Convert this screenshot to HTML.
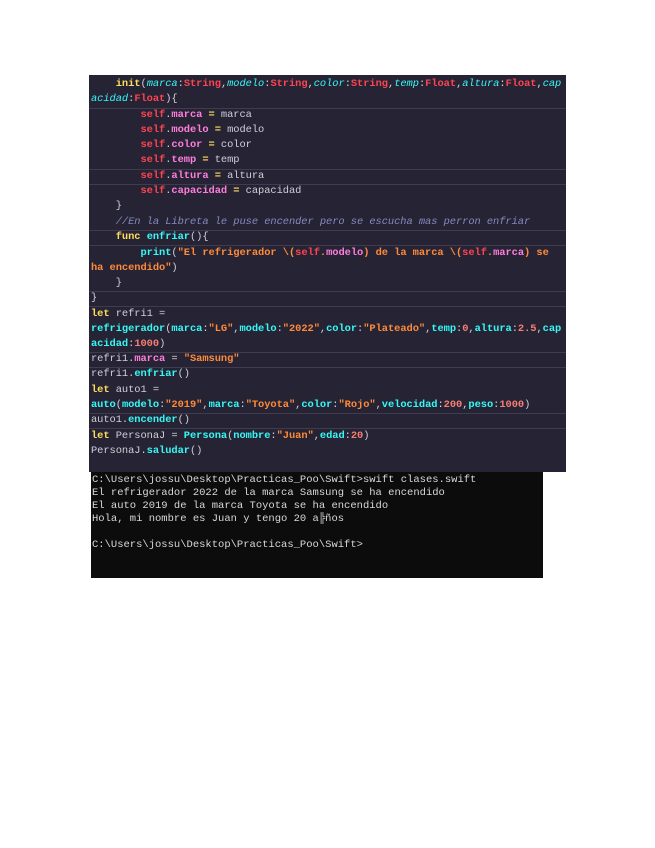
<!DOCTYPE html>
<html><head><meta charset="utf-8"><style>
body{margin:0;width:655px;height:848px;background:#fff;position:relative;overflow:hidden}
#code{position:absolute;left:89px;top:75px;width:477px;height:397px;background:#262335;font-family:"Liberation Mono",monospace;font-size:10.4px;letter-spacing:-0.05px;color:#d0d0d8}
.l{position:absolute;left:2px;white-space:pre;height:15.3px;line-height:15.3px}
.sep{position:absolute;left:0;width:477px;height:1px;background:#3f3c52}
.k{color:#fede5d;font-weight:bold}.p{color:#36f9f6;font-style:italic}.t{color:#fe4450;font-weight:bold}.s{color:#fe4450;font-weight:bold}.m{color:#ff7edb;font-weight:bold}
.str{color:#ff8b39;font-weight:bold}.n{color:#f97e72;font-weight:bold}.f{color:#36f9f6;font-weight:bold}.c{color:#848bbd;font-style:italic}
#term{position:absolute;left:91px;top:472px;width:452px;height:106px;background:#0c0c0c;font-family:"Liberation Mono",monospace;font-size:10.5px;color:#d8d8d8}
#term div{position:absolute;left:1px;white-space:pre;line-height:13px}
</style></head><body>
<div id="code">
<div class="l" style="top:2px">    <span class="k">init</span>(<span class="p">marca</span>:<span class="t">String</span>,<span class="p">modelo</span>:<span class="t">String</span>,<span class="p">color</span>:<span class="t">String</span>,<span class="p">temp</span>:<span class="t">Float</span>,<span class="p">altura</span>:<span class="t">Float</span>,<span class="p">cap</span></div>
<div class="l" style="top:17px"><span class="p">acidad</span>:<span class="t">Float</span>){</div>
<div class="sep" style="top:33px"></div>
<div class="l" style="top:33px">        <span class="s">self</span>.<span class="m">marca</span> <span class="k">=</span> marca</div>
<div class="l" style="top:48px">        <span class="s">self</span>.<span class="m">modelo</span> <span class="k">=</span> modelo</div>
<div class="l" style="top:63px">        <span class="s">self</span>.<span class="m">color</span> <span class="k">=</span> color</div>
<div class="l" style="top:78px">        <span class="s">self</span>.<span class="m">temp</span> <span class="k">=</span> temp</div>
<div class="sep" style="top:94px"></div>
<div class="l" style="top:94px">        <span class="s">self</span>.<span class="m">altura</span> <span class="k">=</span> altura</div>
<div class="sep" style="top:109px"></div>
<div class="l" style="top:109px">        <span class="s">self</span>.<span class="m">capacidad</span> <span class="k">=</span> capacidad</div>
<div class="l" style="top:124px">    }</div>
<div class="l" style="top:140px">    <span class="c">//En la Libreta le puse encender pero se escucha mas perron enfriar</span></div>
<div class="sep" style="top:155px"></div>
<div class="l" style="top:155px">    <span class="k">func</span> <span class="f">enfriar</span>(){</div>
<div class="sep" style="top:170px"></div>
<div class="l" style="top:171px">        <span class="f">print</span>(<span class="str">"El refrigerador \(<span class="s">self</span>.<span class="m">modelo</span>) de la marca \(<span class="s">self</span>.<span class="m">marca</span>) se</span></div>
<div class="l" style="top:186px"><span class="str">ha encendido"</span>)</div>
<div class="l" style="top:201px">    }</div>
<div class="sep" style="top:216px"></div>
<div class="l" style="top:216px">}</div>
<div class="sep" style="top:231px"></div>
<div class="l" style="top:232px"><span class="k">let</span> refri1 =</div>
<div class="l" style="top:247px"><span class="f">refrigerador</span>(<span class="f">marca</span>:<span class="str">"LG"</span>,<span class="f">modelo</span>:<span class="str">"2022"</span>,<span class="f">color</span>:<span class="str">"Plateado"</span>,<span class="f">temp</span>:<span class="n">0</span>,<span class="f">altura</span>:<span class="n">2.5</span>,<span class="f">cap</span></div>
<div class="l" style="top:262px"><span class="f">acidad</span>:<span class="n">1000</span>)</div>
<div class="sep" style="top:277px"></div>
<div class="l" style="top:277px">refri1.<span class="m">marca</span> = <span class="str">"Samsung"</span></div>
<div class="sep" style="top:292px"></div>
<div class="l" style="top:292px">refri1.<span class="f">enfriar</span>()</div>
<div class="l" style="top:308px"><span class="k">let</span> auto1 =</div>
<div class="l" style="top:323px"><span class="f">auto</span>(<span class="f">modelo</span>:<span class="str">"2019"</span>,<span class="f">marca</span>:<span class="str">"Toyota"</span>,<span class="f">color</span>:<span class="str">"Rojo"</span>,<span class="f">velocidad</span>:<span class="n">200</span>,<span class="f">peso</span>:<span class="n">1000</span>)</div>
<div class="sep" style="top:338px"></div>
<div class="l" style="top:338px">auto1.<span class="f">encender</span>()</div>
<div class="sep" style="top:353px"></div>
<div class="l" style="top:354px"><span class="k">let</span> PersonaJ = <span class="f">Persona</span>(<span class="f">nombre</span>:<span class="str">"Juan"</span>,<span class="f">edad</span>:<span class="n">20</span>)</div>
<div class="l" style="top:369px">PersonaJ.<span class="f">saludar</span>()</div>
</div>
<div id="term">
<div style="top:2px">C:\Users\jossu\Desktop\Practicas_Poo\Swift&gt;swift clases.swift</div>
<div style="top:15px">El refrigerador 2022 de la marca Samsung se ha encendido</div>
<div style="top:28px">El auto 2019 de la marca Toyota se ha encendido</div>
<div style="top:41px">Hola, mi nombre es Juan y tengo 20 a╠ños</div>
<div style="top:67px">C:\Users\jossu\Desktop\Practicas_Poo\Swift&gt;</div>
</div>
</body></html>
